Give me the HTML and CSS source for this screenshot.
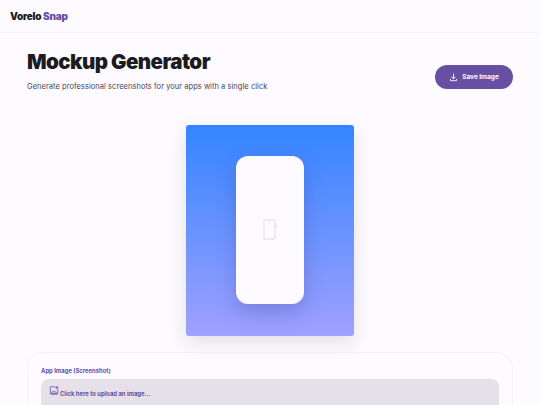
FILE: index.html
```html
<!DOCTYPE html>
<html lang="en">
<head>
<meta charset="utf-8">
<title>Vorelo Snap - Mockup Generator</title>
<link rel="stylesheet" href="styles.css">
</head>
<body>
<header class="topbar">
  <div class="brand">Vorelo <span class="brand-accent">Snap</span></div>
</header>
<main class="main">
  <section class="hero">
    <div class="hero-text">
      <h1 class="title">Mockup Generator</h1>
      <p class="subtitle">Generate professional screenshots for your apps with a single click</p>
    </div>
    <button class="save-btn" type="button">
      <svg class="save-icon" viewBox="0 0 24 24" fill="none" stroke="currentColor" stroke-width="2.4" stroke-linecap="round" stroke-linejoin="round"><path d="M12 3v12"/><path d="M7 10.5l5 5 5-5"/><path d="M4 17v3.5h16V17"/></svg>
      <span>Save Image</span>
    </button>
  </section>
  <section class="stage">
    <div class="canvas">
      <div class="phone">
        <svg class="phone-icon" viewBox="0 0 16 24" fill="none" stroke="currentColor" stroke-width="1.3"><rect x="2" y="2" width="11" height="19" rx="1"/><path d="M6.5 4.5h2"/><path d="M14 7v3"/></svg>
      </div>
    </div>
  </section>
  <section class="panel">
    <label class="field-label">App Image (Screenshot)</label>
    <div class="upload">
      <svg class="upload-icon" viewBox="0 0 24 24" fill="none" stroke="currentColor" stroke-width="1.9" stroke-linecap="round" stroke-linejoin="round"><path d="M14 3H4a1 1 0 0 0-1 1v16a1 1 0 0 0 1 1h16a1 1 0 0 0 1-1V10"/><path d="M19 2v6M16 5h6"/><path d="M6 18l4-5 3 3 2-2 3 4z"/></svg>
      <span>Click here to upload an image...</span>
    </div>
  </section>
</main>
</body>
</html>
```
FILE: styles.css
```css
* { box-sizing: border-box; }
html, body { margin: 0; height: 100%; overflow: hidden; }
body {
  background: #fdfbff;
  color: #1c1b1f;
  font-family: Inter, "Liberation Sans", sans-serif;
}
.topbar {
  height: 33px;
  padding: 0 10px;
  display: flex;
  align-items: center;
  border-bottom: 1px solid #f6f2f8;
}
.brand { font-size: 10px; font-weight: 900; letter-spacing: -0.25px; }
.brand-accent { color: #6750a4; }
.main { height: 372px; padding: 0 27px; overflow: hidden; }
.hero {
  display: flex;
  justify-content: space-between;
  align-items: flex-start;
  padding-top: 15px;
  height: 76px;
}
.title { margin: 0; font-size: 20.5px; line-height: 28px; font-weight: 900; letter-spacing: -0.55px; }
.subtitle { margin: 5px 0 0; font-size: 7.5px; line-height: 12px; color: #49454f; letter-spacing: 0.04px; }
.save-btn {
  width: 78px;
  height: 24px;
  margin-top: 17px;
  border: 0;
  border-radius: 12px;
  background: #6750a4;
  color: #fdfbff;
  font: 700 6.5px Inter, "Liberation Sans", sans-serif;
  display: flex;
  align-items: center;
  justify-content: center;
  gap: 4px;
  padding: 0;
}
.save-icon { width: 9px; height: 9px; }
.stage { display: flex; justify-content: center; padding-top: 16px; }
.canvas {
  width: 168.75px;
  height: 210.75px;
  border-radius: 3px;
  background: linear-gradient(180deg, #3385ff 0%, #a0a0ff 100%);
  box-shadow: 0 7px 18px rgba(60, 40, 80, 0.13);
  display: flex;
  align-items: center;
  justify-content: center;
}
.phone {
  width: 68px;
  height: 148px;
  border-radius: 12px;
  background: #fdfbff;
  box-shadow: 0 8px 20px rgba(50, 50, 120, 0.26);
  display: flex;
  align-items: center;
  justify-content: center;
  color: #e9e2ec;
}
.phone-icon { width: 16px; height: 24px; }
.panel {
  margin-top: 16.5px;
  height: 120px;
  padding: 13px 13px;
  border: 1px solid #f6f1f8;
  border-radius: 16px;
}
.field-label { display: block; font-size: 5.9px; line-height: 9px; font-weight: 700; color: #6750a4; }
.upload {
  margin-top: 4px;
  height: 50px;
  padding: 6px 8px;
  border-radius: 8px;
  background: #e6e0e9;
  color: #6750a4;
  font-size: 5.9px;
  font-weight: 700;
  display: flex;
  align-items: flex-start;
  gap: 1px;
}
.upload span { margin-top: 5px; }
.upload-icon { width: 10px; height: 11px; }
```
